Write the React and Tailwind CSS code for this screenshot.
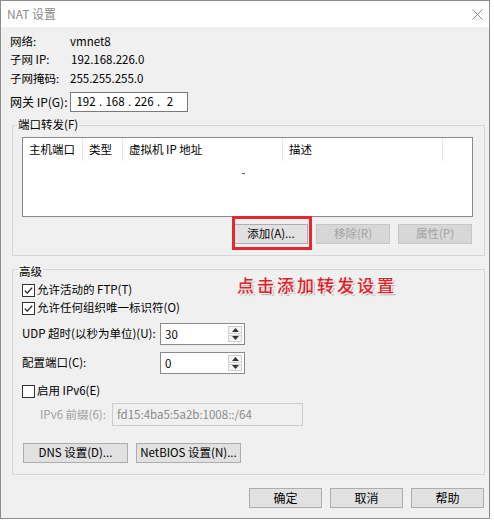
import React from "react";

function Btn({ children, disabled, className = "" }) {
  return (
    <div
      className={
        "h-[20px] flex items-center justify-center border text-[11.5px] leading-none " +
        (disabled
          ? "bg-[#d7d7d7] border-[#c6c6c6] text-[#a2a2a2] "
          : "bg-[#e1e1e1] border-[#adadad] text-black ") +
        className
      }
    >
      {children}
    </div>
  );
}

function Check({ checked }) {
  return (
    <div className="w-[13px] h-[13px] border border-[#333333] bg-white flex items-center justify-center shrink-0">
      {checked && (
        <svg width="11" height="11" viewBox="0 0 11 11">
          <path d="M1.8 5.6 L4.3 8.1 L9.2 2.6" stroke="#1a1a1a" strokeWidth="1.3" fill="none" />
        </svg>
      )}
    </div>
  );
}

function Spin({ value }) {
  return (
    <div className="w-[85px] h-[22px] border border-[#8a8a8a] bg-white flex">
      <div className="flex-1 pl-[4px] leading-[20px] text-[11.5px]">{value}</div>
      <div className="w-[16px] flex flex-col py-[2px] pr-[2px] gap-[1px]">
        <div className="flex-1 border border-[#cfcfcf] bg-[#f4f4f4] flex items-center justify-center">
          <svg width="7" height="4" viewBox="0 0 7 4">
            <path d="M0 4 L3.5 0 L7 4 Z" fill="#333" />
          </svg>
        </div>
        <div className="flex-1 border border-[#cfcfcf] bg-[#f4f4f4] flex items-center justify-center">
          <svg width="7" height="4" viewBox="0 0 7 4">
            <path d="M0 0 L7 0 L3.5 4 Z" fill="#333" />
          </svg>
        </div>
      </div>
    </div>
  );
}

export default function App() {
  return (
    <div className="w-[494px] h-[520px] bg-white font-['Noto_Sans_CJK_SC','Noto_Sans',sans-serif] text-[11.5px] text-black">
      <div className="w-[490px] h-[519px] border border-[#8c8c8c] flex flex-col bg-[#f0f0f0]">
        {/* title bar */}
        <div className="h-[26px] bg-white flex items-center justify-between pl-[6px] pr-[6px]">
          <span className="text-[12px] text-[#8a8a8a]">NAT 设置</span>
          <svg width="11" height="11" viewBox="0 0 11 11">
            <path d="M0.5 0.5 L10.5 10.5 M10.5 0.5 L0.5 10.5" stroke="#8a8a8a" strokeWidth="1" />
          </svg>
        </div>

        {/* body */}
        <div className="flex-1 flex flex-col pl-[9px]">
          <div className="mt-[6px] flex flex-col">
            <div className="flex h-[18px] items-center">
              <span className="w-[60px]">网络:</span>
              <span>vmnet8</span>
            </div>
            <div className="flex h-[18px] items-center">
              <span className="w-[61px]">子网 IP:</span>
              <span>192.168.226.0</span>
            </div>
            <div className="flex h-[19px] items-center">
              <span className="w-[60px]">子网掩码:</span>
              <span>255.255.255.0</span>
            </div>
            <div className="flex h-[20px] items-center mt-[4px]">
              <span className="w-[60px] text-[12px]">网关 IP(G):</span>
              <div className="w-[118px] h-[20px] border border-[#7a7a7a] bg-white flex items-center pl-[2px] text-[11.5px]">
                <span className="w-[26px] text-center">192</span>
                <span className="w-[3px] text-center">.</span>
                <span className="w-[26px] text-center">168</span>
                <span className="w-[3px] text-center">.</span>
                <span className="w-[26px] text-center">226</span>
                <span className="w-[3px] text-center">.</span>
                <span className="w-[20px] text-center">2</span>
              </div>
            </div>
          </div>

          {/* group 1 */}
          <div className="mt-[13px] ml-[2px] mr-[4px] border border-[#d5d5d5] flex flex-col pb-[11px]">
            <div className="-mt-[10px] ml-[4px] px-[1px] h-[16px] leading-[16px] bg-[#f0f0f0] w-fit">端口转发(F)</div>
            <div className="mt-[5px] ml-[9px] w-[451px] h-[80px] border border-[#8a8a8a] bg-white flex flex-col">
              <div className="flex h-[23px]">
                <div className="w-[60px] pl-[6px] flex items-center border-r border-[#e5e5e5]">主机端口</div>
                <div className="w-[40px] pl-[6px] flex items-center border-r border-[#e5e5e5]">类型</div>
                <div className="w-[160px] pl-[6px] flex items-center border-r border-[#e5e5e5]">虚拟机 IP 地址</div>
                <div className="w-[160px] pl-[6px] flex items-center border-r border-[#e5e5e5]">描述</div>
              </div>
              <div className="ml-[219px] mt-[12px] w-[3px] h-[1px] bg-[#555555]"></div>
            </div>
            <div className="mt-[7px] mr-[12px] flex justify-end gap-[8px]">
              <div className="relative">
                <Btn className="w-[74px]">添加(A)...</Btn>
                <div className="absolute -left-[2px] -right-[4px] -top-[8px] -bottom-[6px] border-[3px] border-[#e8262d]"></div>
              </div>
              <Btn disabled className="w-[74px]">移除(R)</Btn>
              <Btn disabled className="w-[74px]">属性(P)</Btn>
            </div>
          </div>

          {/* group 2 */}
          <div className="mt-[13px] ml-[2px] mr-[4px] border border-[#d5d5d5] flex flex-col pb-[11px] relative">
            <div className="-mt-[7px] ml-[5px] px-[1px] h-[16px] leading-[16px] bg-[#f0f0f0] w-fit">高级</div>
            <div className="absolute left-[224px] top-[4px] text-[17px] leading-[22px] tracking-[3px] font-medium text-[#e3202a] [text-shadow:1px_1px_0_#ffffff,2px_2px_1px_#b0b0b0]">
              点击添加转发设置
            </div>
            <div className="mt-[2px] ml-[9px] h-[18px] flex items-center gap-[2px]">
              <Check checked />
              <span>允许活动的 FTP(T)</span>
            </div>
            <div className="ml-[9px] h-[18px] flex items-center gap-[2px]">
              <Check checked />
              <span>允许任何组织唯一标识符(O)</span>
            </div>
            <div className="mt-[6px] ml-[9px] flex items-center">
              <span className="w-[138px]">UDP 超时(以秒为单位)(U):</span>
              <Spin value="30" />
            </div>
            <div className="mt-[7px] ml-[9px] flex items-center">
              <span className="w-[138px]">配置端口(C):</span>
              <Spin value="0" />
            </div>
            <div className="mt-[8px] ml-[9px] h-[18px] flex items-center gap-[2px]">
              <Check />
              <span>启用 IPv6(E)</span>
            </div>
            <div className="mt-[3px] ml-[27px] flex items-center">
              <span className="w-[72px] text-[#a0a0a0]">IPv6 前缀(6):</span>
              <div className="w-[191px] h-[23px] border border-[#cccccc] bg-[#f0f0f0] pl-[4px] flex items-center text-[#8a8a8a]">
                fd15:4ba5:5a2b:1008::/64
              </div>
            </div>
            <div className="mt-[17px] ml-[10px] flex gap-[8px]">
              <Btn className="w-[105px]">DNS 设置(D)...</Btn>
              <Btn className="w-[105px]">NetBIOS 设置(N)...</Btn>
            </div>
          </div>

          {/* bottom buttons */}
          <div className="mt-[13px] mr-[5px] flex justify-end gap-[8px]">
            <Btn className="w-[73px] text-[12px]">确定</Btn>
            <Btn className="w-[73px] text-[12px]">取消</Btn>
            <Btn className="w-[73px] text-[12px]">帮助</Btn>
          </div>
        </div>
      </div>
    </div>
  );
}
